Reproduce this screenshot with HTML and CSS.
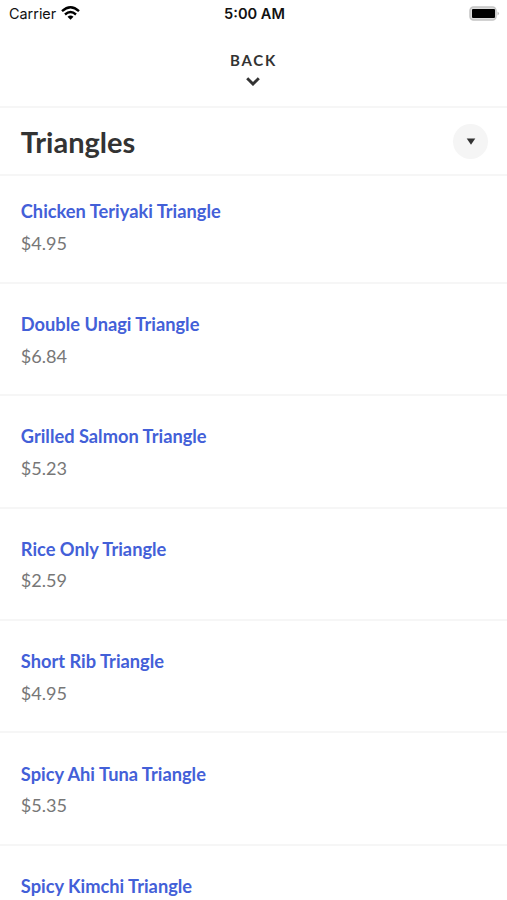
FILE: index.html
```html
<!DOCTYPE html>
<html lang="en">
<head>
<meta charset="utf-8">
<title>Triangles</title>
<link rel="stylesheet" href="styles.css">
</head>
<body>
<div class="status">
  <div class="carrier"><span>Carrier</span>
    <svg class="wifi" width="19" height="15" viewBox="0 0 19 15"><path d="M1 5.200Q9.500-2.600 18 5.200M4 8.500Q9.500 3.700 15 8.500" fill="none" stroke="#000" stroke-width="2.400"/><path d="M6.500 10.700Q9.500 8.300 12.500 10.700L9.500 13.800z"/></svg>
  </div>
  <div class="time">5:00 AM</div>
  <svg class="battery" width="31" height="15" viewBox="0 0 31 15"><rect x="1" y="1" width="26" height="13" rx="3.500" fill="#ddd" stroke="#c4c4c4" stroke-width="1.500"/><rect x="3" y="3" width="23" height="9" rx="1"/><path d="M28.500 5.500q3 2 0 4z" fill="#bbb"/></svg>
</div>
<header class="back"><span>BACK</span>
  <svg width="14" height="9" viewBox="0 0 14 9"><path d="M1.200 1.200L7 7l5.800-5.800" fill="none" stroke="#333" stroke-width="2.900"/></svg>
</header>
<div class="heading"><h1>Triangles</h1><button class="toggle" aria-label="Categories"><svg width="10" height="7" viewBox="0 0 10 7"><path d="M.7.500h8.600L5 6.700z" fill="#333"/></svg></button></div>
<main>
  <article class="item"><h2>Chicken Teriyaki Triangle</h2><p>$4.95</p></article>
  <article class="item"><h2>Double Unagi Triangle</h2><p>$6.84</p></article>
  <article class="item"><h2>Grilled Salmon Triangle</h2><p>$5.23</p></article>
  <article class="item"><h2>Rice Only Triangle</h2><p>$2.59</p></article>
  <article class="item"><h2>Short Rib Triangle</h2><p>$4.95</p></article>
  <article class="item"><h2>Spicy Ahi Tuna Triangle</h2><p>$5.35</p></article>
  <article class="item"><h2>Spicy Kimchi Triangle</h2></article>
</main>
</body>
</html>
```
FILE: styles.css
```css
* { box-sizing: border-box; }
body { margin: 0; height: 900px; overflow: hidden; background: #fff; color: #333; font-family: Lato, sans-serif; }
h1, h2, p { margin: 0; }
svg { display: block; }
.status { height: 28px; padding: 0 7px 0 9px; display: grid; grid-template-columns: 1fr auto 1fr; align-items: center; font: 14.4px/28px Inter, sans-serif; color: #111; }
.carrier { display: flex; align-items: center; gap: 5px; }
.wifi { margin-top: -1px; }
.time { font-weight: 600; font-size: 14.6px; }
.battery { justify-self: end; margin-top: -1px; }
.back { height: 80px; padding: 22px 0 0; display: flex; flex-direction: column; align-items: center; gap: 7px; border-bottom: 2px solid #f6f6f6; font-size: 15px; line-height: 20px; font-weight: 700; letter-spacing: 1.7px; }
.back svg { margin-right: 1px; }
.heading { height: 68.4px; padding: 0 19px 0 20.8px; display: flex; align-items: center; justify-content: space-between; border-bottom: 2px solid #f6f6f6; }
h1 { margin-top: 2px; font-size: 29px; line-height: 34px; font-weight: 700; }
.toggle { width: 35px; height: 35px; padding: 0; border: 0; border-radius: 50%; background: #f5f5f5; display: grid; place-items: center; }
.item { height: 112.4px; padding: 27.2px 20.8px 0; border-bottom: 2px solid #f6f6f6; }
.item:first-child { height: 107.4px; padding-top: 22px; }
.item:last-child { height: auto; border: 0; }
.item:last-child h2 { height: 23px; }
h2 { color: #4360d8; font-size: 18.25px; line-height: 26px; font-weight: 700; }
p { margin-top: 5.6px; color: #777; font-size: 18.1px; line-height: 26px; }
```
